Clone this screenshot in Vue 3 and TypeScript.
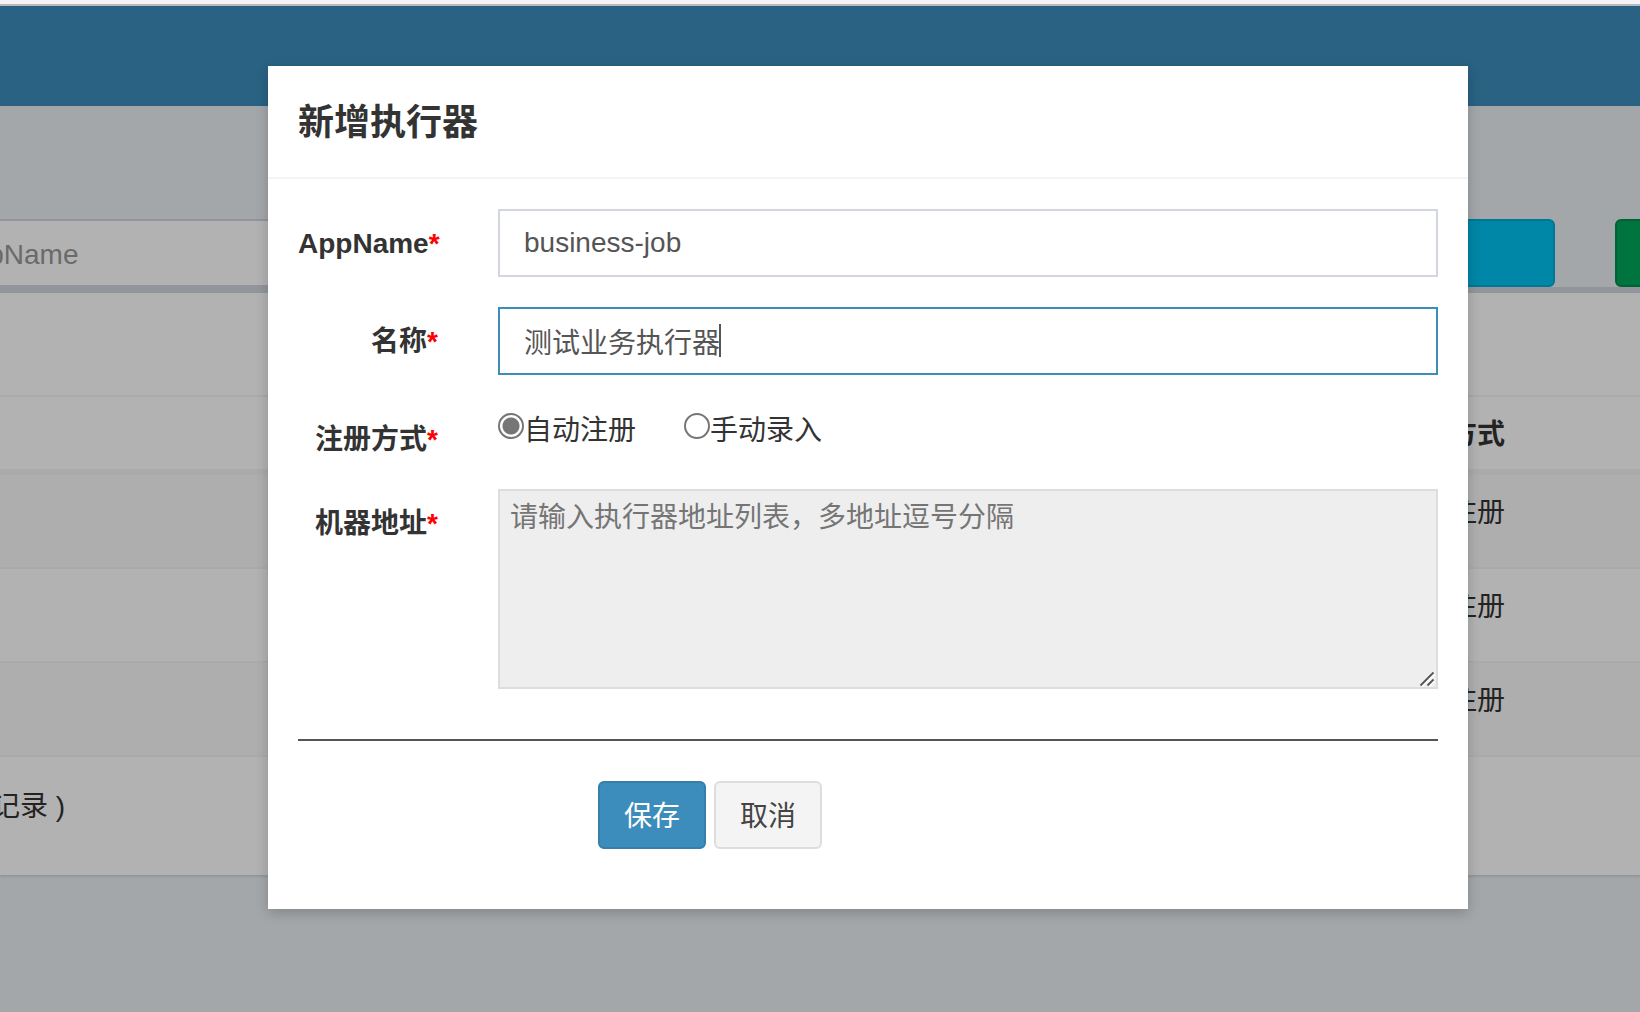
<script setup lang="ts">
import { ref } from 'vue'

interface Executor {
  id: number
  registry: string
}

const keyword = ref('')
const executors: Executor[] = [
  { id: 1, registry: '自动注册' },
  { id: 2, registry: '自动注册' },
  { id: 3, registry: '自动注册' },
]

const appName = ref('business-job')
const title = ref('测试业务执行器')
const addressType = ref('auto')
const addressList = ref('')
</script>

<template>
  <div class="app">
    <div class="toolbar-edge"></div>
    <div class="stage">
      <div class="page">
        <header class="navbar"></header>
        <div class="search">
          <input v-model="keyword" class="search-input" type="text" placeholder="AppName" aria-label="AppName" />
          <button class="btn search-btn info" type="button" aria-label="搜索"></button>
          <button class="btn search-btn success" type="button" aria-label="新增"></button>
        </div>
        <section class="box">
          <div class="box-header"></div>
          <table class="list">
            <colgroup>
              <col />
              <col class="col-registry" />
            </colgroup>
            <thead>
              <tr>
                <th></th>
                <th>注册方式</th>
              </tr>
            </thead>
            <tbody>
              <tr v-for="item in executors" :key="item.id">
                <td></td>
                <td>{{ item.registry }}</td>
              </tr>
            </tbody>
          </table>
          <div class="summary">记录 )</div>
        </section>
      </div>

      <div class="backdrop">
        <div class="modal" role="dialog" aria-labelledby="modal-title">
          <div class="modal-header">
            <h4 id="modal-title">新增执行器</h4>
          </div>
          <form class="modal-body" @submit.prevent>
            <div class="group">
              <label class="label" for="appname">AppName<span class="star">*</span></label>
              <div class="field">
                <input id="appname" v-model="appName" class="control" type="text" />
              </div>
            </div>
            <div class="group">
              <label class="label" for="title">名称<span class="star">*</span></label>
              <div class="field">
                <input id="title" v-model="title" class="control active" type="text" />
                <span class="caret"></span>
              </div>
            </div>
            <div class="group">
              <span class="label">注册方式<span class="star">*</span></span>
              <div class="field radios">
                <label class="radio"><input v-model="addressType" type="radio" name="addressType" value="auto" />自动注册</label>
                <label class="radio"><input v-model="addressType" type="radio" name="addressType" value="manual" />手动录入</label>
              </div>
            </div>
            <div class="group">
              <label class="label" for="addresses">机器地址<span class="star">*</span></label>
              <div class="field">
                <textarea id="addresses" v-model="addressList" class="control area" readonly placeholder="请输入执行器地址列表，多地址逗号分隔"></textarea>
                <svg class="grip" viewBox="0 0 16 16" width="16" height="16" aria-hidden="true">
                  <path d="M3 15.5L15.5 3M10 15.5L15.5 10" stroke="#fff" stroke-width="2" />
                  <path d="M1.5 14.5L14.5 1.5M8.5 14.5L14.5 8.5" stroke="#555" stroke-width="1.8" />
                </svg>
              </div>
            </div>
            <hr class="rule" />
            <div class="actions">
              <button class="btn primary" type="submit">保存</button>
              <button class="btn default" type="button">取消</button>
            </div>
          </form>
        </div>
      </div>
    </div>
  </div>
</template>

<style>
body {
  margin: 0;
}
</style>

<style scoped>
.app,
.app * {
  box-sizing: border-box;
}

.app {
  display: flex;
  flex-direction: column;
  min-height: 100vh;
  overflow: hidden;
  color: #333;
  font-family: "Liberation Sans", "Noto Sans CJK SC", sans-serif;
  font-size: 28px;
  line-height: 40px;
}

input,
textarea,
button {
  margin: 0;
  font: inherit;
  outline: none;
}

.toolbar-edge {
  height: 6px;
  background: #f5f5f5;
  border-bottom: 2px solid #b9bcbd;
}

.stage {
  position: relative;
  flex: 1;
  background: #eaf0f3;
}

.navbar {
  height: 100px;
  background: #3c8dbc;
}

.search {
  display: flex;
  padding-top: 113px;
}

.search-input {
  flex: 1;
  min-width: 0;
  height: 68px;
  margin-left: -72px;
  margin-right: 60px;
  padding: 14px 24px 10px;
  border: 2px solid #d2d6de;
  background: #fff;
}

.search-input::placeholder {
  color: #999;
}

.btn {
  height: 68px;
  padding: 14px 24px 10px;
  border: 2px solid;
  border-radius: 6px;
  line-height: 40px;
}

.search-btn {
  width: 200px;
}

.info {
  margin-right: 60px;
  background: #00c0ef;
  border-color: #00acd6;
}

.success {
  margin-right: -175px;
  background: #00a65a;
  border-color: #008d4c;
}

.box {
  background: #fff;
  border-top: 6px solid #d2d6de;
  box-shadow: 0 2px 2px rgba(0, 0, 0, 0.1);
}

.box-header {
  height: 104px;
  border-bottom: 2px solid #f4f4f4;
}

.list {
  width: 100%;
  table-layout: fixed;
  border-collapse: separate;
  border-spacing: 0;
}

.col-registry {
  width: 263px;
}

.list th,
.list td {
  padding: 18px 16px 14px;
  text-align: left;
  vertical-align: top;
}

.list th {
  height: 78px;
  border-bottom: 6px solid #f4f4f4;
}

.list td {
  height: 94px;
  border-bottom: 2px solid #f4f4f4;
}

.list tbody tr:nth-child(odd) {
  background: #f9f9f9;
}

.summary {
  height: 118px;
  margin-left: -8px;
  padding-top: 30px;
}

.backdrop {
  position: absolute;
  inset: 0;
  padding: 60px 0 0 96px;
  background: rgba(0, 0, 0, 0.3);
}

.modal {
  width: 1200px;
  max-width: 100%;
  margin: 0 auto;
  background: #fff;
  box-shadow: 0 4px 12px rgba(0, 0, 0, 0.2);
}

.modal-header {
  padding: 31px 30px 29px;
  border-bottom: 2px solid #f4f4f4;
}

.modal-header h4 {
  margin: 0;
  font-size: 36px;
  font-weight: 700;
  line-height: 51px;
}

.modal-body {
  padding: 30px;
}

.group {
  display: flex;
  gap: 60px;
  margin-bottom: 30px;
}

.label {
  width: 140px;
  height: 54px;
  padding-top: 16px;
  font-weight: 700;
  line-height: 38px;
  text-align: right;
  white-space: nowrap;
}

.star {
  color: #f00;
}

.field {
  position: relative;
  flex: 1;
}

.control {
  display: block;
  width: 100%;
  height: 68px;
  padding: 12px 24px;
  border: 2px solid #d2d6de;
  border-radius: 0;
  background: #fff;
  color: #555;
}

.active {
  border-color: #3c8dbc;
}

.caret {
  position: absolute;
  top: 17px;
  left: 221px;
  width: 2px;
  height: 33px;
  background: #555;
}

.radios {
  display: flex;
  gap: 48px;
  height: 54px;
  padding-top: 6px;
}

.radio {
  display: flex;
}

.radio input {
  appearance: none;
  width: 26px;
  height: 26px;
  margin-top: 2px;
  border: 2px solid #767676;
  border-radius: 50%;
}

.radio input:checked {
  background: radial-gradient(circle, #767676 8px, transparent 9px);
}

.area {
  height: 200px;
  padding: 7px 10px;
  border-color: #ddd;
  background: #eee;
  resize: none;
}

.area::placeholder {
  color: #757575;
}

.grip {
  position: absolute;
  right: 3px;
  bottom: 2px;
  fill: none;
}

.rule {
  margin: 50px 0 40px;
  border: 0;
  border-top: 2px solid #555;
}

.actions {
  display: flex;
  gap: 8px;
  margin: 0 0 30px 300px;
}

.primary {
  background: #3c8dbc;
  border-color: #367fa9;
  color: #fff;
}

.default {
  background: #f4f4f4;
  border-color: #ddd;
  color: #444;
}
</style>
